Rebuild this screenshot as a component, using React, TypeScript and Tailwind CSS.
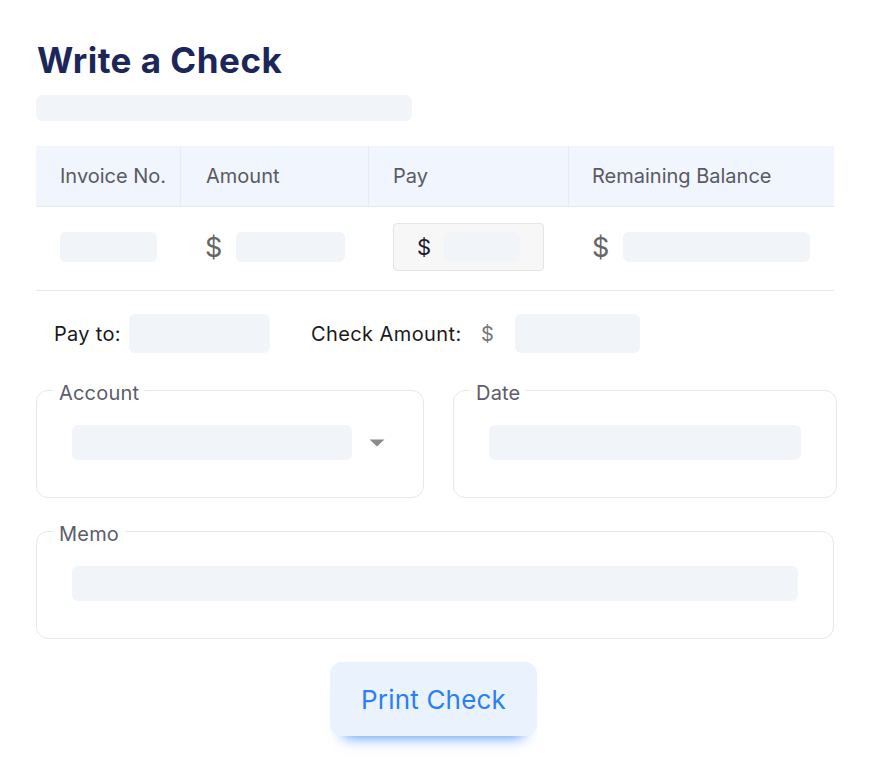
import React from "react";

const font = { fontFamily: "Inter, 'Noto Sans', sans-serif" };

function Field({ className }: { className: string }) {
  return <div className={`rounded-md bg-[#f1f4f8] ${className}`} />;
}

function Group({
  label,
  className,
  children,
}: {
  label: string;
  className: string;
  children: React.ReactNode;
}) {
  return (
    <fieldset className={`shrink-0 rounded-xl border border-[#e6e7ea] ${className}`}>
      <legend className="ml-[16px] px-[6px] pt-[5px] text-[20px] leading-[22px] text-[#5c5c6c] tracking-[0.2px]">
        {label}
      </legend>
      {children}
    </fieldset>
  );
}

export default function App() {
  return (
    <div className="min-h-screen bg-white" style={font}>
      <div className="w-[798px] ml-[36px] pt-[38px]">
        <h1 className="text-[35px] font-bold leading-[44px] text-[#1c2659] ml-px tracking-[0.5px]">
          Write a Check
        </h1>
        <Field className="mt-[13px] h-[26px] w-[376px]" />

        {/* invoice table */}
        <div className="mt-[25px]">
          <div className="flex h-[61px] bg-[#f0f5fe] border-b border-[#e6e8ec] text-[20px] text-[#5a5a62]">
            <div className="w-[145px] flex items-center pl-[24px] border-r border-[#e6ecf6]">Invoice No.</div>
            <div className="w-[188px] flex items-center pl-[25px] border-r border-[#e6ecf6]">Amount</div>
            <div className="w-[200px] flex items-center pl-[24px] border-r border-[#e6ecf6]">Pay</div>
            <div className="flex-1 flex items-center pl-[23px]">Remaining Balance</div>
          </div>
          <div className="flex h-[84px] items-center pb-[3px] border-b border-[#e6e7ea]">
            <div className="w-[145px] pl-[24px]">
              <Field className="h-[30px] w-[97px]" />
            </div>
            <div className="w-[188px] pl-[24px] flex items-center">
              <span className="w-[31px] text-[27px] text-[#666] leading-none">$</span>
              <Field className="h-[30px] w-[109px]" />
            </div>
            <div className="w-[200px] pl-[24px]">
              <div className="flex items-center h-[48px] w-[151px] rounded-sm border border-[#e4e4e4] bg-[#f7f7f7] pl-[23px]">
                <span className="w-[27px] text-[22px] text-[#1a1a2e] leading-none">$</span>
                <Field className="h-[30px] w-[76px]" />
              </div>
            </div>
            <div className="flex-1 pl-[23px] flex items-center">
              <span className="w-[31px] text-[27px] text-[#666] leading-none">$</span>
              <Field className="h-[30px] w-[187px]" />
            </div>
          </div>
        </div>

        {/* pay to */}
        <div className="mt-[23px] flex items-center h-[39px] pl-[18px] text-[20px] text-[#1a1a1a]">
          <span className="w-[75px] tracking-[0.3px]">Pay to:</span>
          <Field className="h-[39px] w-[141px]" />
          <span className="ml-[41px] w-[170px] tracking-[0.4px]">Check Amount:</span>
          <span className="w-[34px] text-[#777]">$</span>
          <Field className="h-[39px] w-[125px]" />
        </div>

        {/* account + date */}
        <div className="mt-[24px] flex gap-[29px]">
          <Group label="Account" className="w-[388px] h-[121px]">
            <div className="flex items-center pl-[35px] pt-[21px]">
              <Field className="h-[35px] w-[280px]" />
              <svg width="16" height="8" viewBox="0 0 16 8" className="ml-[17px]">
                <path d="M0.5 0.5 L15.5 0.5 L8 7.5 Z" fill="#8a8a8a" />
              </svg>
            </div>
          </Group>
          <Group label="Date" className="w-[384px] h-[121px]">
            <div className="pl-[35px] pt-[21px]">
              <Field className="h-[35px] w-[312px]" />
            </div>
          </Group>
        </div>

        <Group label="Memo" className="mt-[20px] w-[798px] h-[121px]">
          <div className="pl-[35px] pt-[21px]">
            <Field className="h-[35px] w-[726px]" />
          </div>
        </Group>

        <div className="mt-[23px] flex">
          <button
            type="button"
            className="ml-[294px] h-[74px] w-[207px] rounded-xl bg-[#eaf2fe] text-[26px] text-[#2a7ff3] tracking-[0.2px] shadow-[0_14px_14px_-14px_rgba(37,122,247,0.95)]"
          >
            Print Check
          </button>
        </div>
      </div>
    </div>
  );
}
